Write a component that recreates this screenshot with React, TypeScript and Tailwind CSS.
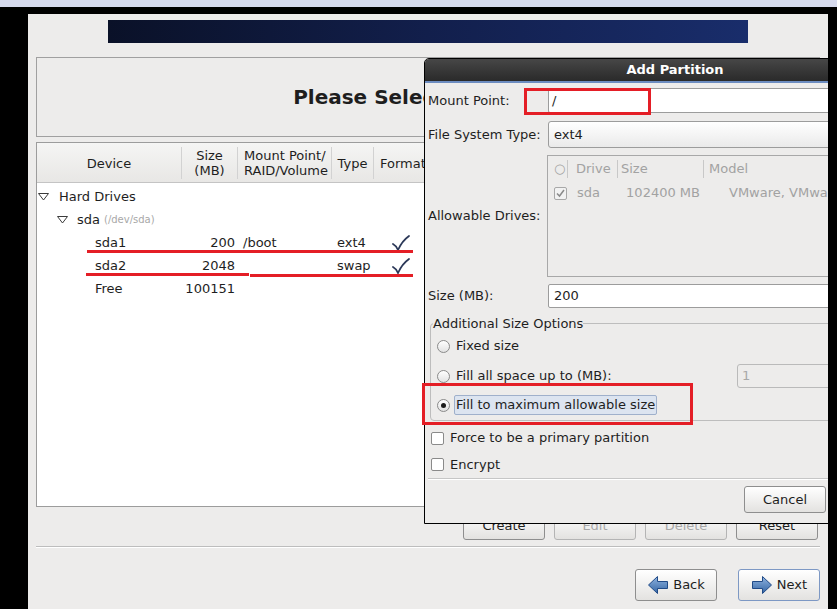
import React from "react";

function Expander() {
  return (
    <svg width="11" height="8" viewBox="0 0 11 8" className="shrink-0">
      <polygon points="0.5,0.5 10.5,0.5 5.5,7" fill="none" stroke="#3a3a3a" strokeWidth="1" />
    </svg>
  );
}

function Tick() {
  return (
    <svg width="18" height="16" viewBox="0 0 18 16">
      <path d="M1 9 Q4 10.5 6 15 Q10 6 17 1" fill="none" stroke="#2b3858" strokeWidth="1.8" strokeLinecap="round" />
    </svg>
  );
}

function Radio({ on }: { on?: boolean }) {
  return (
    <span className="w-[13px] h-[13px] shrink-0 rounded-full border border-[#8a8a8a] bg-linear-to-b from-white to-[#e2e2e2] flex items-center justify-center">
      {on && <span className="w-[5px] h-[5px] rounded-full bg-[#1c1c1c]" />}
    </span>
  );
}

function Check({ on, dim }: { on?: boolean; dim?: boolean }) {
  return (
    <span
      className={`w-[13px] h-[13px] shrink-0 rounded-[2px] border flex items-center justify-center ${
        dim ? "border-[#a8a8a8] bg-[#f2f2f2]" : "border-[#8a8a8a] bg-white"
      }`}
    >
      {on && (
        <svg width="9" height="9" viewBox="0 0 9 9">
          <path d="M1 4.5 L3.5 7 L8 1" fill="none" stroke={dim ? "#8a8a8a" : "#222"} strokeWidth="1.5" />
        </svg>
      )}
    </span>
  );
}

function Arrow({ left }: { left?: boolean }) {
  return (
    <svg width="22" height="20" viewBox="0 0 22 20" className={left ? "-scale-x-100" : ""}>
      <defs>
        <linearGradient id={left ? "ga" : "gb"} x1="0" y1="0" x2="0" y2="1">
          <stop offset="0" stopColor="#8fb3e0" />
          <stop offset="1" stopColor="#3465a4" />
        </linearGradient>
      </defs>
      <path
        d="M1.5 6.5 H11.5 V1.5 L20.5 10 L11.5 18.5 V13.5 H1.5 Z"
        fill={`url(#${left ? "ga" : "gb"})`}
        stroke="#204a87"
        strokeWidth="1"
      />
    </svg>
  );
}

function Btn({
  children,
  disabled,
  focus,
  className = "",
}: {
  children: React.ReactNode;
  disabled?: boolean;
  focus?: boolean;
  className?: string;
}) {
  return (
    <div
      className={`w-[82px] rounded-[3px] border bg-linear-to-b from-white to-[#e3e2e0] flex items-center justify-center gap-[4px] ${
        focus ? "border-[#7d98c4]" : disabled ? "border-[#b4b4b4]" : "border-[#8e8e8e]"
      } ${disabled ? "text-[#a8a8a8]" : "text-[#1e1e1e]"} ${className}`}
    >
      {children}
    </div>
  );
}

const rows = [
  { dev: "sda1", size: "200", mount: "/boot", type: "ext4", fmt: true },
  { dev: "sda2", size: "2048", mount: "", type: "swap", fmt: true },
  { dev: "Free", size: "100151", mount: "", type: "", fmt: false },
];

export default function App() {
  return (
    <div className="w-[837px] h-[609px] bg-black overflow-hidden text-[13px] text-[#1e1e1e] font-['DejaVu_Sans',sans-serif]">
      <div className="h-[7px] bg-[#d6daed]" />
      <div className="mt-[7px] ml-[28px] w-[800px] h-[595px] bg-[#edeceb] relative overflow-hidden">
        {/* banner */}
        <div className="ml-[80px] mt-[6px] w-[640px] h-[23px] bg-linear-to-r from-[#0a1128] via-[#121f4c] to-[#192d6b]" />

        {/* header */}
        <div className="mx-[8px] mt-[14px] h-[80px] border border-[#a0a0a0] flex items-center justify-center pr-[14px]">
          <span className="text-[20px] font-bold">Please Select A Device</span>
        </div>

        {/* partition table */}
        <div className="mx-[8px] mt-[5px] h-[365px] border border-[#9c9c9c] bg-white relative">
          <div className="h-[40px] flex bg-linear-to-b from-[#f5f5f4] to-[#e8e7e5] border-b border-[#c4c4c4] leading-[15px]">
            <div className="w-[144px] flex items-center justify-center pt-[1px]">Device</div>
            <div className="w-[56px] flex items-center">
              <div className="w-px h-[32px] bg-[#d2d2d2]" />
              <div className="flex-1 text-center">Size<br />(MB)</div>
            </div>
            <div className="w-[94px] flex items-center">
              <div className="w-px h-[32px] bg-[#d2d2d2]" />
              <div className="flex-1 pl-[6px]">Mount Point/<br />RAID/Volume</div>
            </div>
            <div className="w-[42px] flex items-center">
              <div className="w-px h-[32px] bg-[#d2d2d2]" />
              <div className="flex-1 text-center pt-[1px]">Type</div>
            </div>
            <div className="flex-1 flex items-center">
              <div className="w-px h-[32px] bg-[#d2d2d2]" />
              <div className="pl-[6px] pt-[1px]">Format</div>
            </div>
          </div>

          <div className="pt-[2px]">
            <div className="h-[23px] flex items-center pl-[1px]">
              <Expander />
              <span className="ml-[10px]">Hard Drives</span>
            </div>
            <div className="h-[23px] flex items-center pl-[20px]">
              <Expander />
              <span className="ml-[9px]">sda</span>
              <span className="ml-[4px] text-[10px] text-[#a8a8a8]">(/dev/sda)</span>
            </div>
            {rows.map((r) => (
              <div key={r.dev} className="h-[23px] flex items-center">
                <div className="w-[144px] pl-[58px]">{r.dev}</div>
                <div className="w-[56px] text-right pr-[2px]">{r.size}</div>
                <div className="w-[94px] pl-[6px]">{r.mount}</div>
                <div className="w-[42px] pl-[6px]">{r.type}</div>
                <div className="flex-1 pl-[19px] flex items-center">{r.fmt && <Tick />}</div>
              </div>
            ))}
          </div>

          {/* annotation lines */}
          <div className="absolute left-[50px] top-[107px] w-[326px] h-[3px] bg-[#e41e26]" />
          <div className="absolute left-[49px] top-[130px] w-[163px] h-[3px] bg-[#e41e26]" />
          <div className="absolute left-[213px] top-[131px] w-[163px] h-[3px] bg-[#e41e26]" />
        </div>

        {/* table buttons */}
        <div className="mt-[5px] h-[28px] flex justify-end gap-[9px] pr-[10px]">
          <Btn>Create</Btn>
          <Btn disabled>Edit</Btn>
          <Btn disabled>Delete</Btn>
          <Btn>Reset</Btn>
        </div>

        <div className="mx-[8px] mt-[6px] h-px bg-[#bdbdbd]" />
        <div className="mx-[8px] h-px bg-white" />

        <div className="mt-[21px] h-[32px] flex justify-end gap-[21px] pr-[8px]">
          <Btn className="h-[32px]">
            <Arrow left />
            <span>Back</span>
          </Btn>
          <Btn className="h-[32px]" focus>
            <Arrow />
            <span>Next</span>
          </Btn>
        </div>

        {/* Add Partition dialog */}
        <div className="absolute left-[396px] top-[44px] w-[502px] h-[466px] border border-black rounded-t-[5px] bg-[#edeceb]">
          <div className="h-[22px] rounded-t-[4px] bg-linear-to-b from-[#474747] to-[#2a2a2a] flex items-center justify-center text-white font-bold">
            Add Partition
          </div>
          <div className="h-[2px] bg-[#6c8cc0]" />

          <div className="pl-[3px] pr-[4px]">
            <div className="mt-[5px] h-[25px] flex items-center">
              <div className="w-[120px]">Mount Point:</div>
              <div className="flex-1 h-full bg-white border border-[#9c9c9c] rounded-[2px] flex items-center pl-[3px]">/</div>
            </div>

            <div className="mt-[8px] h-[27px] flex items-center">
              <div className="w-[120px]">File System Type:</div>
              <div className="flex-1 h-full border border-[#9c9c9c] rounded-[3px] bg-linear-to-b from-white to-[#eaeaea] flex items-center pl-[5px]">
                ext4
              </div>
            </div>

            <div className="mt-[7px] h-[122px] flex items-center">
              <div className="w-[119px]">Allowable Drives:</div>
              <div className="flex-1 h-full border border-[#a8a8a8] text-[#a2a2a2]">
                <div className="mt-[1px] h-[24px] flex items-center">
                  <div className="w-[19px] pl-[6px]">○</div>
                  <div className="w-[50px] flex items-center">
                    <div className="w-px h-[18px] bg-[#c8c8c8]" />
                    <span className="pl-[8px]">Drive</span>
                  </div>
                  <div className="w-[86px] flex items-center">
                    <div className="w-px h-[18px] bg-[#c8c8c8]" />
                    <span className="pl-[3px]">Size</span>
                  </div>
                  <div className="flex-1 flex items-center">
                    <div className="w-px h-[18px] bg-[#c8c8c8]" />
                    <span className="pl-[5px]">Model</span>
                  </div>
                </div>
                <div className="h-[24px] flex items-center">
                  <div className="w-[19px] pl-[6px] flex">
                    <Check on dim />
                  </div>
                  <div className="w-[50px] pl-[10px]">sda</div>
                  <div className="w-[86px] text-right pr-[3px]">102400 MB</div>
                  <div className="flex-1 pl-[26px] whitespace-nowrap">VMware, VMwa</div>
                </div>
              </div>
            </div>

            <div className="mt-[7px] h-[24px] flex items-center">
              <div className="w-[120px]">Size (MB):</div>
              <div className="flex-1 h-full bg-white border border-[#9c9c9c] rounded-[2px] flex items-center pl-[5px]">200</div>
            </div>
          </div>

          <fieldset className="ml-[5px] mr-[4px] mt-[8px] px-[2px] border border-[#bdbdbd] rounded-[4px] h-[105px]">
            <legend className="px-0 leading-[15px]">Additional Size Options</legend>
            <div className="pl-[4px]">
              <div className="h-[30px] flex items-center">
                <Radio />
                <span className="ml-[6px]">Fixed size</span>
              </div>
              <div className="h-[30px] flex items-center">
                <div className="w-[300px] flex items-center">
                  <Radio />
                  <span className="ml-[6px]">Fill all space up to (MB):</span>
                </div>
                <div className="w-[120px] h-[24px] border border-[#bababa] rounded-[3px] flex items-center pl-[4px] text-[#a8a8a8]">1</div>
              </div>
              <div className="h-[28px] flex items-center">
                <Radio on />
                <span className="ml-[4px] h-[20px] px-[1px] flex items-center bg-[#dce4f0] border border-[#9fb0cb] rounded-[2px]">
                  Fill to maximum allowable size
                </span>
              </div>
            </div>
          </fieldset>

          <div className="pl-[6px] mt-[4px]">
            <div className="h-[26px] flex items-center">
              <Check />
              <span className="ml-[6px]">Force to be a primary partition</span>
            </div>
            <div className="h-[27px] flex items-center">
              <Check />
              <span className="ml-[6px]">Encrypt</span>
            </div>
          </div>

          <div className="mx-[3px] h-px bg-[#c6c6c6]" />
          <div className="mx-[3px] h-px bg-white" />

          <div className="mt-[6px] h-[27px] flex pl-[319px]">
            <Btn className="h-[27px]">Cancel</Btn>
          </div>

          {/* annotation boxes */}
          <div className="absolute left-[99px] top-[29px] w-[127px] h-[27px] border-[3px] border-[#e41e26]" />
          <div className="absolute left-[-3px] top-[324px] w-[271px] h-[42px] border-[3px] border-[#e41e26]" />
        </div>
      </div>
    </div>
  );
}
